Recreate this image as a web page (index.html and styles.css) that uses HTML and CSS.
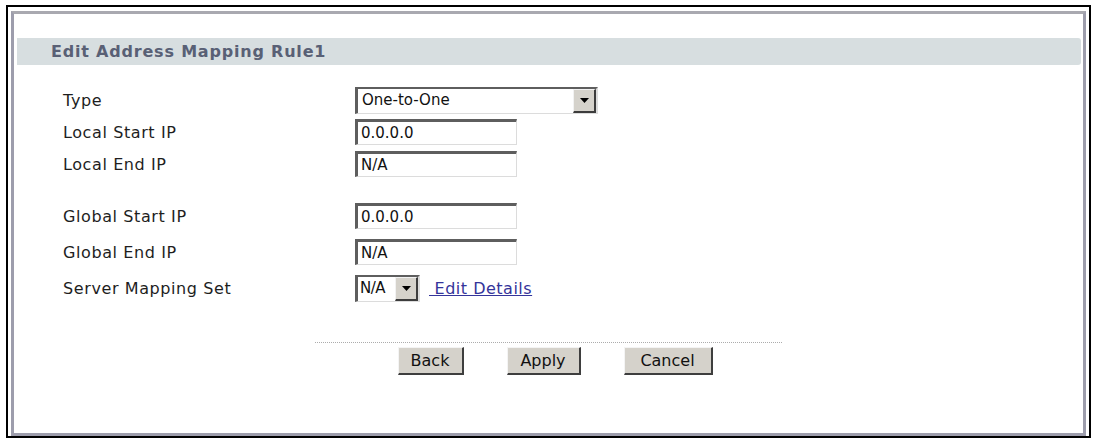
FILE: index.html
```html
<!DOCTYPE html>
<html lang="en">
<head>
    <meta charset="UTF-8">
    <title>Edit Address Mapping Rule</title>
    <link rel="stylesheet" href="styles.css">
</head>
<body>

    <div class="frame">
        <div class="panel">
            <div class="title-bar">Edit Address Mapping Rule1</div>

            <div class="form">
                <div class="group">
                    <div class="row">
                        <span class="label">Type</span>
                        <div class="combo combo-wide">
                            <span class="combo-text">One-to-One</span>
                            <span class="combo-btn"><svg width="9" height="5" viewBox="0 0 9 5"><path d="M0 0H9L4.5 5Z" fill="#000"/></svg></span>
                        </div>
                    </div>
                    <div class="row">
                        <span class="label">Local Start IP</span>
                        <input class="field" type="text" value="0.0.0.0">
                    </div>
                    <div class="row">
                        <span class="label">Local End IP</span>
                        <input class="field" type="text" value="N/A">
                    </div>
                </div>

                <div class="group group-global">
                    <div class="row">
                        <span class="label">Global Start IP</span>
                        <input class="field" type="text" value="0.0.0.0">
                    </div>
                    <div class="row">
                        <span class="label">Global End IP</span>
                        <input class="field" type="text" value="N/A">
                    </div>
                    <div class="row">
                        <span class="label">Server Mapping Set</span>
                        <div class="combo combo-small">
                            <span class="combo-text">N/A</span>
                            <span class="combo-btn"><svg width="9" height="5" viewBox="0 0 9 5"><path d="M0 0H9L4.5 5Z" fill="#000"/></svg></span>
                        </div>
                        <a class="link" href="#">&nbsp;Edit Details</a>
                    </div>
                </div>
            </div>

            <div class="actions">
                <div class="rule"></div>
                <div class="buttons">
                    <button class="btn btn-back">Back</button>
                    <button class="btn btn-apply">Apply</button>
                    <button class="btn btn-cancel">Cancel</button>
                </div>
            </div>
        </div>
    </div>

</body>
</html>
```

FILE: styles.css
```css
body {
    margin: 0;
    background: white;
    font-family: "DejaVu Sans", Verdana, sans-serif;
    color: #1e1e1e;
}
.frame {
    margin: 5px 2px 0 6px;
    border: 2px solid #000;
    padding: 4px 3px 0 3px;
}
.panel {
    height: 425px;
    box-sizing: border-box;
    border: 3px solid #9d9dac;
    border-top-color: #a9a9b0;
    background: white;
    overflow: hidden;
}
.title-bar {
    margin: 24px 2px 0 3px;
    height: 27px;
    line-height: 27px;
    padding-left: 34px;
    background-color: #d7dee0;
    border-radius: 0 3px 3px 0;
    color: #596075;
    font-size: 16px;
    font-weight: bold;
    letter-spacing: 0.8px;
}
.form {
    margin-top: 19px;
    padding-left: 49px;
}
.group .row {
    height: 32px;
}
.group-global {
    margin-top: 18px;
}
.group-global .row {
    height: 36px;
}
.row {
    display: flex;
    align-items: center;
}
.label {
    width: 292px;
    font-size: 16px;
    letter-spacing: 0.6px;
    flex-shrink: 0;
}
.field {
    box-sizing: border-box;
    width: 162px;
    height: 26px;
    margin: 0;
    padding: 0 3px;
    font-family: "DejaVu Sans", Verdana, sans-serif;
    font-size: 15px;
    color: #111;
    background: white;
    border-style: solid;
    border-width: 3px 1px 1px 3px;
    border-color: #5e5e5e #dcdcdc #dcdcdc #5e5e5e;
    outline: none;
}
.combo {
    box-sizing: border-box;
    height: 27px;
    display: flex;
    align-items: stretch;
    background: white;
    border-style: solid;
    border-width: 2px 2px 1px 3px;
    border-color: #5e5e5e #dcdcdc #dcdcdc #5e5e5e;
}
.combo-wide {
    width: 243px;
}
.combo-small {
    width: 65px;
}
.combo-text {
    flex: 1;
    padding-left: 4px;
    font-size: 15px;
    line-height: 23px;
    color: #111;
}
.combo-small .combo-text {
    padding-left: 2px;
    letter-spacing: -0.5px;
}
.combo-btn {
    width: 23px;
    display: flex;
    align-items: center;
    justify-content: center;
    box-sizing: border-box;
    background-color: #d5d2cb;
    border-style: solid;
    border-width: 1px 2px 2px 1px;
    border-color: #f2f2f2 #3c3c3c #3c3c3c #f2f2f2;
}
.link {
    margin-left: 9px;
    font-size: 16px;
    letter-spacing: 0.5px;
    color: #34349a;
    text-decoration: underline;
}
.actions {
    margin-top: 36px;
}
.rule {
    width: 467px;
    margin: 0 auto;
    border-top: 1px dotted #acacac;
}
.buttons {
    margin-top: 4px;
    padding-left: 13px;
    display: flex;
    justify-content: center;
    gap: 43px;
}
.btn {
    box-sizing: border-box;
    height: 28px;
    padding: 0;
    font-family: "DejaVu Sans", Verdana, sans-serif;
    font-size: 16px;
    color: #111;
    background-color: #d5d2cb;
    border-style: solid;
    border-width: 1px 2px 2px 1px;
    border-color: #f4f4f4 #3e3e3e #3e3e3e #f4f4f4;
    cursor: pointer;
}
.btn-back {
    width: 66px;
}
.btn-apply {
    width: 74px;
}
.btn-cancel {
    width: 89px;
}
```
